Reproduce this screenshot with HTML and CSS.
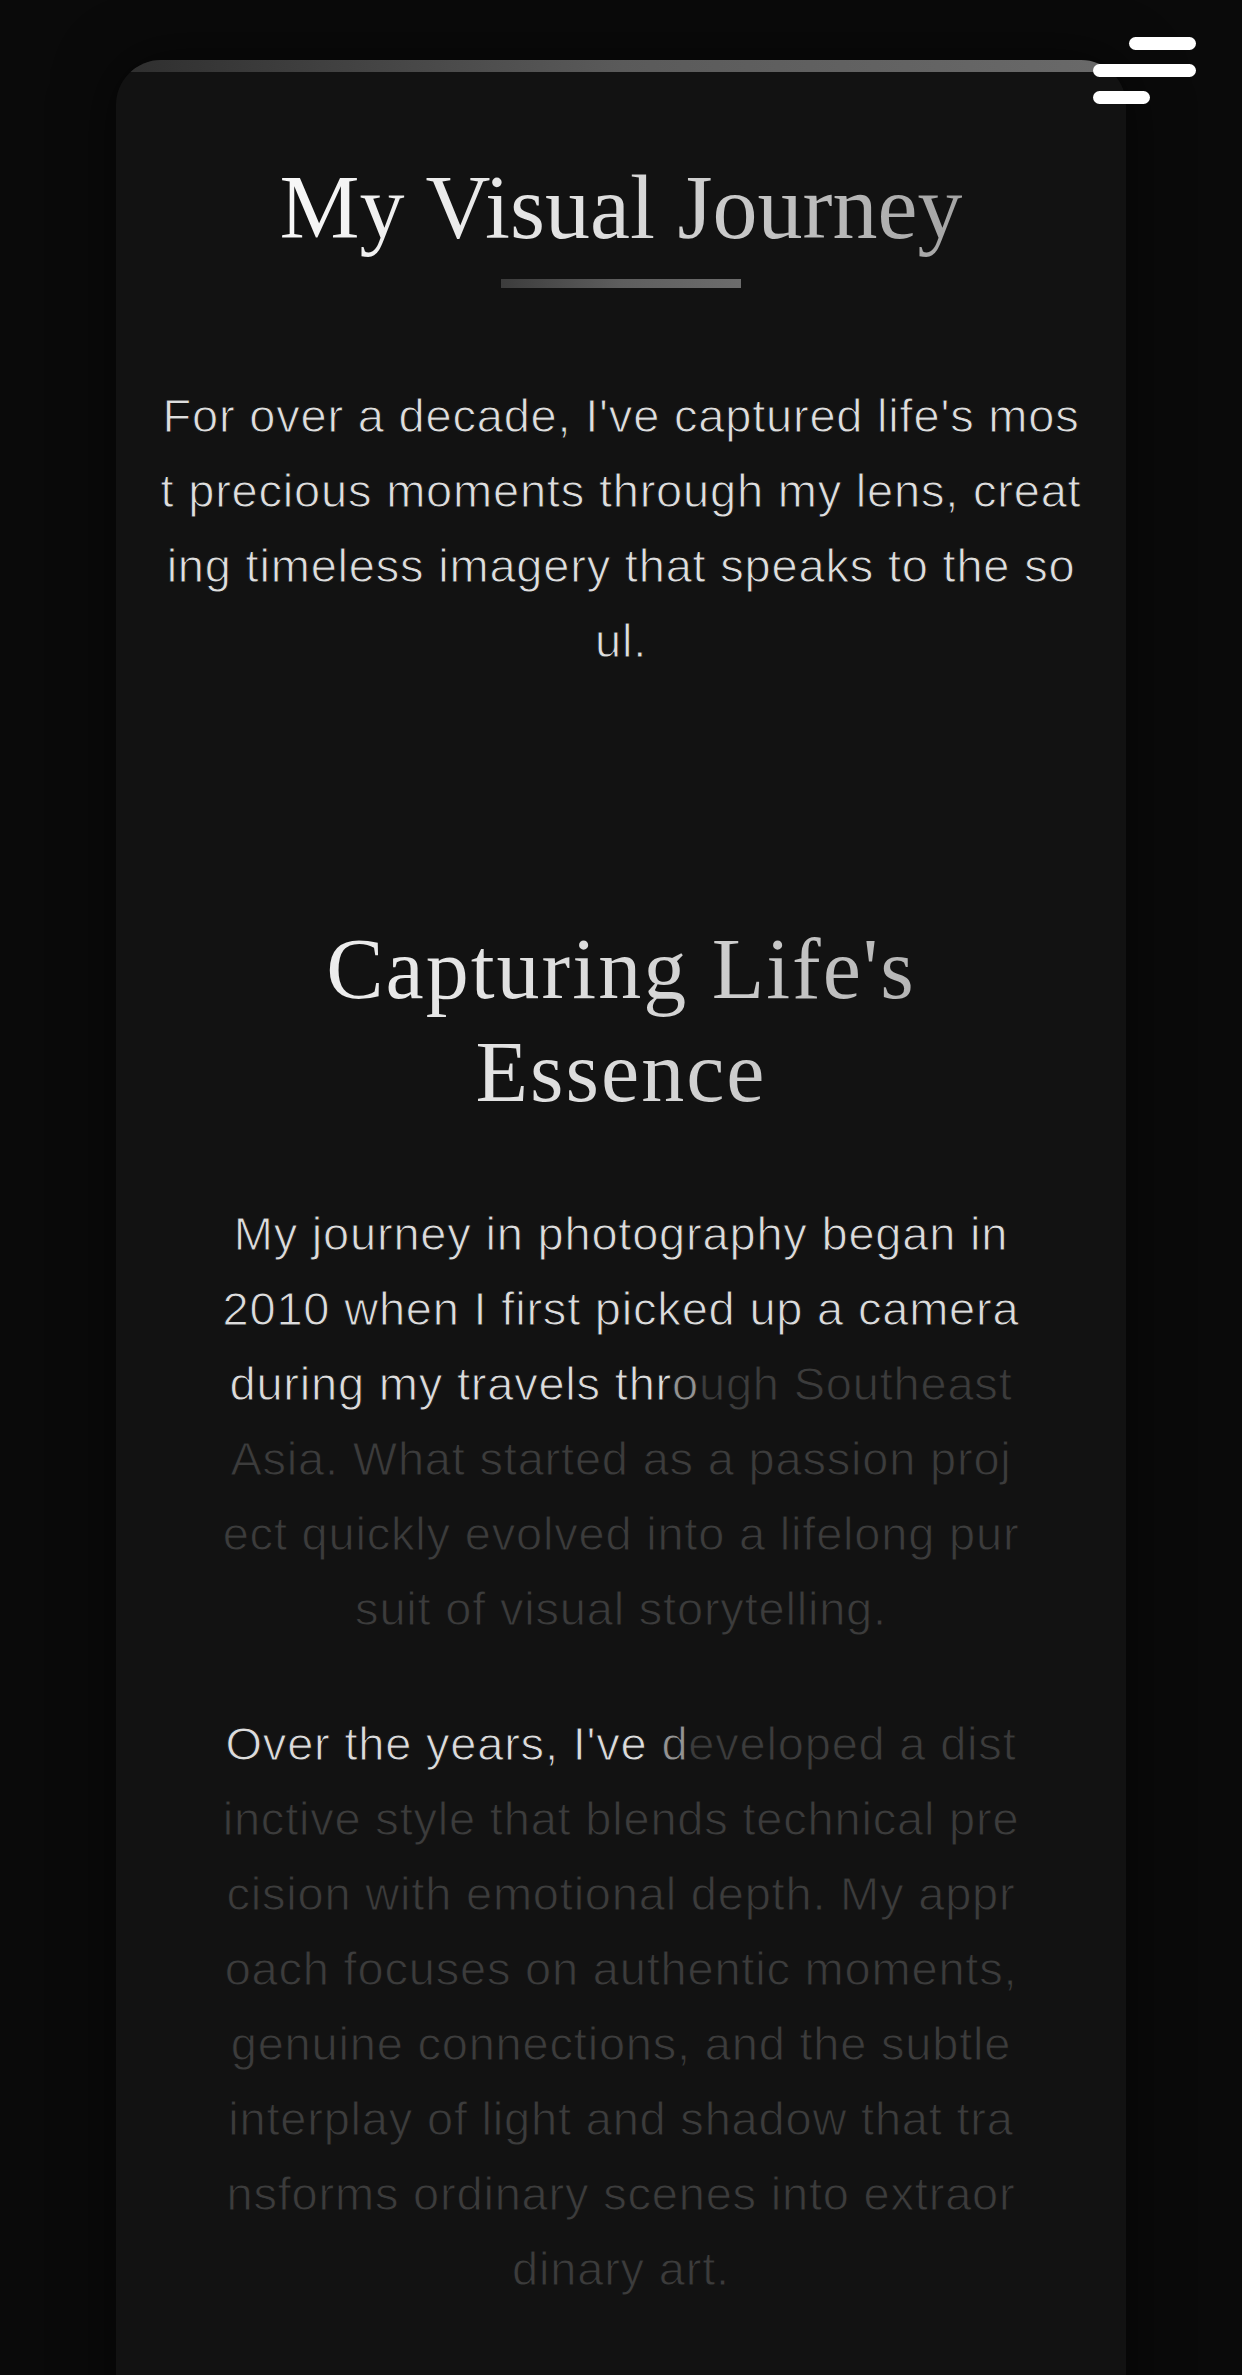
FILE: index.html
```html
<!DOCTYPE html>
<html lang="en">
<head>
<meta charset="utf-8">
<title>My Visual Journey</title>
<link rel="stylesheet" href="styles.css">
</head>
<body>
<button class="menu" aria-label="Menu">
  <span class="menu-line menu-line--top"></span>
  <span class="menu-line menu-line--mid"></span>
  <span class="menu-line menu-line--bot"></span>
</button>
<main class="card">
  <div class="card-bar"></div>
  <header class="intro">
    <h1 class="title">My Visual Journey</h1>
    <div class="rule"></div>
    <p class="lead">For over a decade, I've captured life's most precious moments through my lens, creating timeless imagery that speaks to the soul.</p>
  </header>
  <section class="story">
    <h2 class="story-title">Capturing Life's Essence</h2>
    <p class="story-text"><span class="lit">My journey in photography began in 2010 when I first picked up a camera during my travels thr</span><span class="half">o</span><span class="dim">ugh Southeast Asia. What started as a passion project quickly evolved into a lifelong pursuit of visual storytelling.</span></p>
    <p class="story-text"><span class="lit">Over the years, I've </span><span class="half">d</span><span class="dim">eveloped a distinctive style that blends technical precision with emotional depth. My approach focuses on authentic moments, genuine connections, and the subtle interplay of light and shadow that transforms ordinary scenes into extraordinary art.</span></p>
  </section>
</main>
</body>
</html>
```

FILE: styles.css
```css
html, body {
  margin: 0;
  padding: 0;
}

body {
  background: #0a0a0a;
  min-height: 2375px;
  font-family: "Liberation Sans", Arial, sans-serif;
  overflow: hidden;
}

.menu {
  position: fixed;
  top: 37px;
  right: 46px;
  width: 103px;
  padding: 0;
  border: 0;
  background: transparent;
  display: flex;
  flex-direction: column;
  gap: 14px;
  z-index: 10;
}

.menu-line {
  display: block;
  height: 13px;
  border-radius: 7px;
  background: #ffffff;
}

.menu-line--top {
  width: 67px;
  align-self: flex-end;
}

.menu-line--mid {
  width: 103px;
}

.menu-line--bot {
  width: 57px;
}

.card {
  width: 1010px;
  margin: 60px auto 0;
  background: #121212;
  border-radius: 45px 45px 0 0;
  overflow: hidden;
  box-shadow: 0 0 60px rgba(0, 0, 0, 0.6);
  min-height: 2400px;
}

.card-bar {
  height: 12px;
  background: linear-gradient(90deg, #2e2e2e 0%, #5a5a5a 50%, #6a6a6a 100%);
}

.intro {
  padding: 82px 42px 0;
  display: flex;
  flex-direction: column;
  align-items: center;
}

.title {
  margin: 0;
  font-family: "Liberation Serif", serif;
  font-weight: 400;
  font-size: 90px;
  line-height: 107px;
  background: linear-gradient(90deg, #f8f8f8 0%, #e0e0e0 45%, #a4a4a4 100%);
  -webkit-background-clip: text;
  background-clip: text;
  color: transparent;
}

.rule {
  width: 240px;
  height: 9px;
  margin-top: 18px;
  background: linear-gradient(90deg, #3c3c3c 0%, #5e5e5e 50%, #6c6c6c 100%);
}

.lead {
  margin: 90px 0 0;
  width: 100%;
  text-align: center;
  font-size: 47px;
  font-weight: 400;
  line-height: 75px;
  letter-spacing: 0.8px;
  color: #dedede;
  -webkit-text-stroke: 1px #121212;
  word-break: break-all;
}

.story {
  padding: 240px 105px 0;
  display: flex;
  flex-direction: column;
  align-items: center;
}

.story-title {
  margin: 0;
  text-align: center;
  font-family: "Liberation Serif", serif;
  font-weight: 400;
  font-size: 86px;
  line-height: 103px;
  letter-spacing: 2px;
  background: linear-gradient(90deg, #f4f4f4 0%, #dadada 50%, #a8a8a8 100%);
  -webkit-background-clip: text;
  background-clip: text;
  color: transparent;
}

.story-text {
  margin: 72px 0 0;
  width: 100%;
  text-align: center;
  font-size: 47px;
  font-weight: 400;
  line-height: 75px;
  letter-spacing: 0.8px;
  -webkit-text-stroke: 1px #121212;
  word-break: break-all;
}

.story-text + .story-text {
  margin-top: 60px;
}

.lit {
  color: #dcdcdc;
}

.half {
  color: #939393;
}

.dim {
  color: #3c3c3c;
}
```
